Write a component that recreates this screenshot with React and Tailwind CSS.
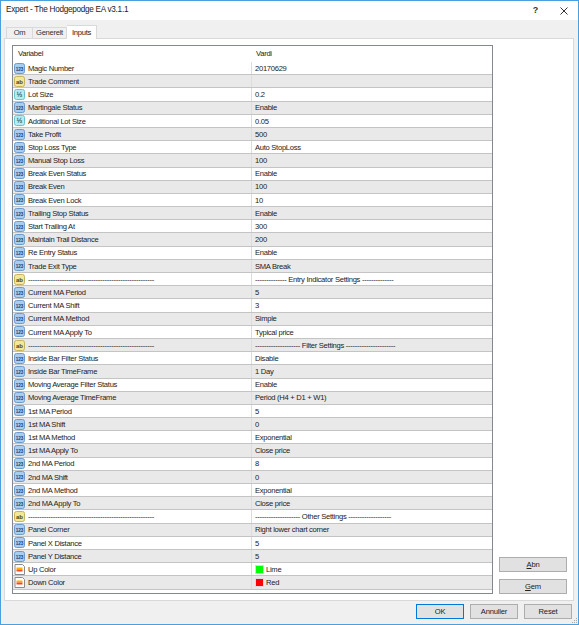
const D = (n) => '-'.repeat(n);

const ROWS = [
  ['n', 'Magic Number', '20170629'],
  ['s', 'Trade Comment', ''],
  ['d', 'Lot Size', '0.2'],
  ['n', 'Martingale Status', 'Enable'],
  ['d', 'Additional Lot Size', '0.05'],
  ['n', 'Take Profit', '500'],
  ['n', 'Stop Loss Type', 'Auto StopLoss'],
  ['n', 'Manual Stop Loss', '100'],
  ['n', 'Break Even Status', 'Enable'],
  ['n', 'Break Even', '100'],
  ['n', 'Break Even Lock', '10'],
  ['n', 'Trailing Stop Status', 'Enable'],
  ['n', 'Start Trailing At', '300'],
  ['n', 'Maintain Trail Distance', '200'],
  ['n', 'Re Entry Status', 'Enable'],
  ['n', 'Trade Exit Type', 'SMA Break'],
  ['s', D(56), `${D(14)} Entry Indicator Settings ${D(14)}`],
  ['n', 'Current MA Period', '5'],
  ['n', 'Current MA Shift', '3'],
  ['n', 'Current MA Method', 'Simple'],
  ['n', 'Current MA Apply To', 'Typical price'],
  ['s', D(56), `${D(20)} Filter Settings ${D(22)}`],
  ['n', 'Inside Bar Filter Status', 'Disable'],
  ['n', 'Inside Bar TimeFrame', '1 Day'],
  ['n', 'Moving Average Filter Status', 'Enable'],
  ['n', 'Moving Average TimeFrame', 'Period (H4 + D1 + W1)'],
  ['n', '1st MA Period', '5'],
  ['n', '1st MA Shift', '0'],
  ['n', '1st MA Method', 'Exponential'],
  ['n', '1st MA Apply To', 'Close price'],
  ['n', '2nd MA Period', '8'],
  ['n', '2nd MA Shift', '0'],
  ['n', '2nd MA Method', 'Exponential'],
  ['n', '2nd MA Apply To', 'Close price'],
  ['s', D(56), `${D(20)} Other Settings ${D(19)}`],
  ['n', 'Panel Corner', 'Right lower chart corner'],
  ['n', 'Panel X Distance', '5'],
  ['n', 'Panel Y Distance', '5'],
  ['c', 'Up Color', 'Lime', 'bg-[#00ff00]'],
  ['c', 'Down Color', 'Red', 'bg-[#ff0000]'],
];

function TypeIcon({ type }) {
  if (type === 'c') {
    return (
      <svg width="11" height="11" viewBox="0 0 11 11" className="shrink-0">
        <path d="M1 .5h7.5l2 2v8H1z" fill="#fff" stroke="#8a8a8a" />
        <rect x="2.5" y="3.5" width="6" height="2" fill="#ffb000" />
        <rect x="2.5" y="5.5" width="6" height="2" fill="#f04a2a" />
      </svg>
    );
  }
  const look = {
    n: { fill: '#a9cdee', line: '#6b9bcb', label: '123', color: '#143e78', size: 4.6 },
    s: { fill: '#f3e79a', line: '#c4b25c', label: 'ab', color: '#4e4410', size: 6 },
    d: { fill: '#b5ecef', line: '#6cc0cb', label: '½', color: '#145a68', size: 7 },
  }[type];
  return (
    <svg width="11" height="11" viewBox="0 0 11 11" className="shrink-0">
      <rect x=".5" y=".5" width="10" height="10" rx="2" fill={look.fill} stroke={look.line} />
      <text
        x="5.5"
        y="7.6"
        textAnchor="middle"
        fontSize={look.size}
        fontWeight="700"
        letterSpacing="0"
        fontFamily="Liberation Sans, sans-serif"
        fill={look.color}
      >
        {look.label}
      </text>
    </svg>
  );
}

function Row({ row, index }) {
  const [type, name, value, swatch] = row;
  const shaded = index % 2 === 1;
  return (
    <div className={`flex h-[13.2px] border-b border-[#c4c4c4] ${shaded ? 'bg-[#e9e9e9]' : 'bg-white'}`}>
      <div className="flex w-[239px] shrink-0 items-center gap-[3px] overflow-hidden border-r border-[#dcdcdc] pl-[1px]">
        <TypeIcon type={type} />
        <span className="whitespace-nowrap pt-[1px]">{name}</span>
      </div>
      <div className="flex min-w-0 flex-1 items-center gap-[2px] pl-[3px]">
        {swatch && <span className={`h-[9px] w-[9px] shrink-0 border border-[#e2d8e2] ${swatch}`} />}
        <span className="whitespace-nowrap pt-[1px]">{value}</span>
      </div>
    </div>
  );
}

function Btn({ children, primary, className = '' }) {
  return (
    <button
      type="button"
      className={`flex h-[15px] items-center justify-center border bg-[#e1e1e1] text-[7.6px] tracking-[-0.2px] text-[#222] ${primary ? 'border-[#0078d7]' : 'border-[#adadad]'} ${className}`}
    >
      {children}
    </button>
  );
}

export default function App() {
  return (
    <div
      className="relative flex h-[625px] w-[579px] flex-col border border-[#4a9fdc] bg-[#f0f0f0] text-[7.6px] leading-none tracking-[-0.28px] text-[#222]"
      style={{ fontFamily: '"Liberation Sans", Arial, sans-serif' }}
    >
      {/* Title bar */}
      <div className="flex h-[19px] shrink-0 items-center justify-between bg-white pl-[5px] pr-[10px]">
        <span className="text-[8.2px]">Expert - The Hodgepodge EA v3.1.1</span>
        <div className="flex items-center gap-[22px]">
          <span className="text-[9px] font-bold text-[#333]">?</span>
          <svg width="8" height="8" viewBox="0 0 8 8">
            <path d="M.5.5l7 7M7.5.5l-7 7" stroke="#333" strokeWidth="1" fill="none" />
          </svg>
        </div>
      </div>

      {/* Tabs */}
      <div className="flex h-[18px] shrink-0 items-end pl-[5px]">
        <div className="flex h-[11px] w-[27px] items-center justify-center border border-b-0 border-[#d9d9d9] bg-[#f0f0f0] text-[#333]">Om</div>
        <div className="flex h-[11px] w-[34px] items-center justify-center border border-b-0 border-l-0 border-[#d9d9d9] bg-[#f0f0f0] text-[#333]">Generelt</div>
        <div className="z-10 -mb-px flex h-[14px] w-[30px] items-center justify-center border border-b-0 border-l-0 border-[#d9d9d9] bg-white">Inputs</div>
      </div>

      {/* Panel */}
      <div className="ml-[3px] mr-[4px] flex h-[563px] shrink-0 gap-[6px] border border-[#d9d9d9] bg-white pb-[6px] pl-[7px] pr-[6px] pt-[6px]">
        <div className="flex w-[481px] shrink-0 flex-col border border-[#828790] bg-white">
          <div className="flex h-[16px] shrink-0 items-center">
            <div className="w-[239px] pl-[5px]">Variabel</div>
            <div className="pl-[4px]">Vardi</div>
          </div>
          {ROWS.map((row, i) => (
            <Row key={i} row={row} index={i} />
          ))}
        </div>
        <div className="flex flex-1 flex-col justify-end gap-[7px]">
          <Btn><span><span className="underline">A</span>bn</span></Btn>
          <Btn><span><span className="underline">G</span>em</span></Btn>
        </div>
      </div>

      {/* Footer */}
      <div className="flex flex-1 items-start justify-end gap-[6px] pr-[6px] pt-[3px]">
        <Btn primary className="w-[48px]">OK</Btn>
        <Btn className="w-[48px]">Annuller</Btn>
        <Btn className="w-[48px]">Reset</Btn>
      </div>

      {/* Resize grip */}
      <svg width="7" height="7" viewBox="0 0 7 7" className="absolute bottom-0 right-0">
        <path d="M5 1h1v1H5zM3 3h1v1H3zM5 3h1v1H5zM1 5h1v1H1zM3 5h1v1H3zM5 5h1v1H5z" fill="#a8a8a8" />
      </svg>
    </div>
  );
}
